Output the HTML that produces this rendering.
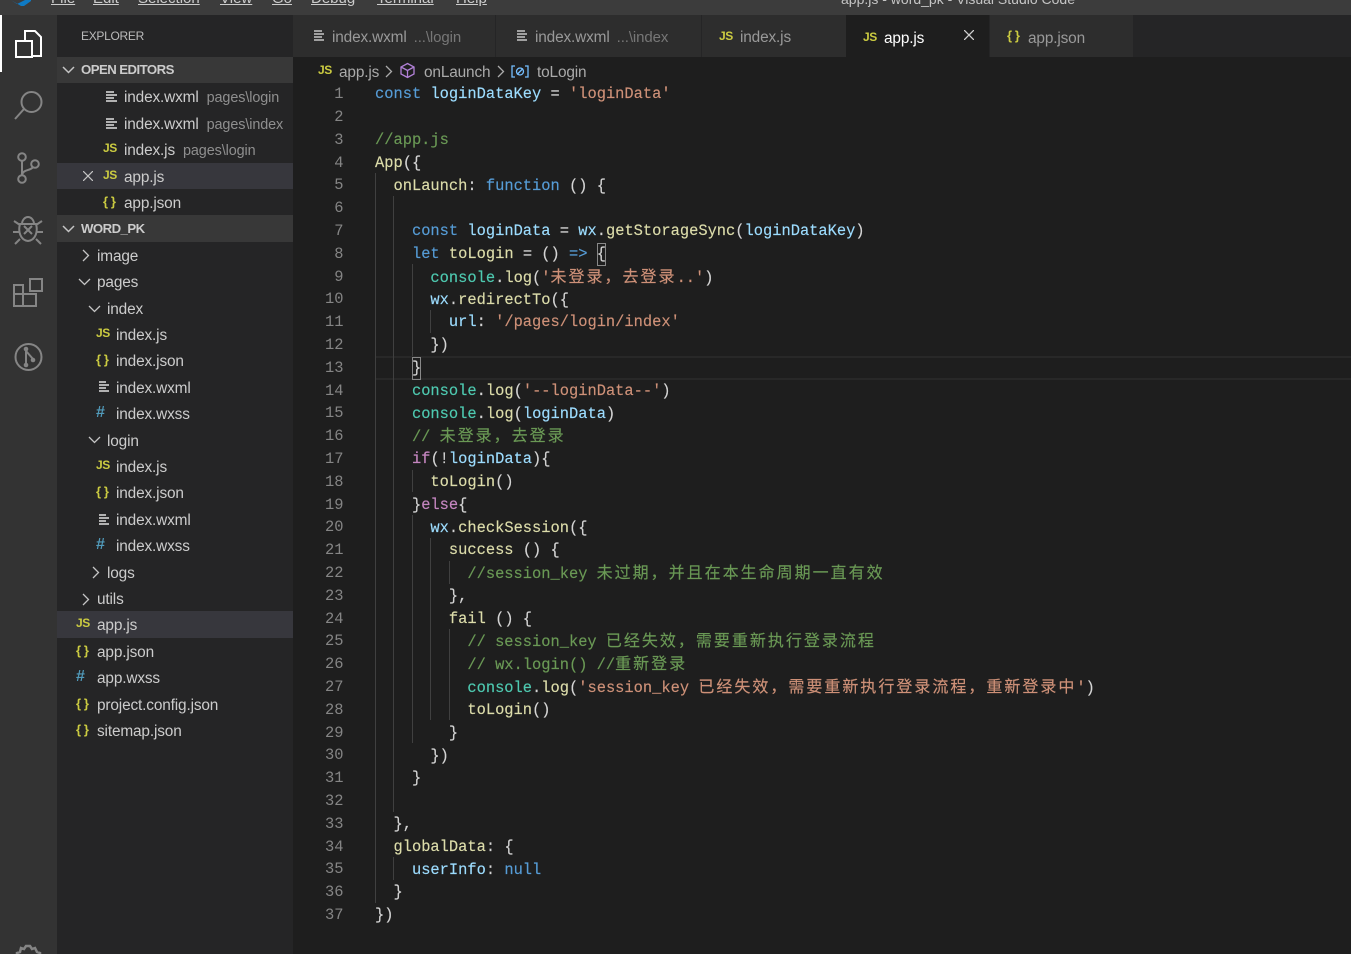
<!DOCTYPE html>
<html><head><meta charset="utf-8">
<style>
html,body{margin:0;padding:0;background:#1e1e1e;overflow:hidden}
#r{position:relative;width:1351px;height:954px;overflow:hidden;background:#1e1e1e;font-family:"Liberation Sans","Noto Sans CJK SC",sans-serif}
#r div,#r svg{position:absolute}
.m{top:-11px;font-size:15px;line-height:20px;color:#ccc;text-decoration:underline;white-space:nowrap}
.t{font-size:15.4px;line-height:20px;color:#ccc;white-space:nowrap;letter-spacing:-.15px;margin-top:.5px}
.t i{font-style:normal;font-size:14.4px;color:#8f8f8f;margin-left:8px;letter-spacing:-.1px}
.js{font-size:12px;font-weight:bold;color:#cbcb41;line-height:14px;letter-spacing:-.4px;margin-top:-1px}
.br{font-size:13px;font-weight:bold;color:#cbcb41;line-height:14px;white-space:nowrap;letter-spacing:-.4px}
.h{font-size:16px;font-weight:bold;color:#519aba;line-height:16px}
.sec{left:57px;width:236px;background:#383838}
.hd{font-size:13.2px;font-weight:bold;color:#ccc;line-height:16px;letter-spacing:-.55px;white-space:nowrap}
.tab{top:15px;height:42px;background:#2d2d2d}
.n{left:300px;width:43.5px;text-align:right;color:#858585;font:15.4px/22.8px "Liberation Mono",monospace;margin-top:1.3px}
.l{left:375px;font:15.4px/22.8px "Liberation Mono","Noto Sans CJK SC",monospace;color:#d4d4d4;white-space:pre;margin-top:1.4px;-webkit-text-stroke:.15px}
.l u{text-decoration:none;font-family:"Noto Sans CJK SC",sans-serif;font-size:16px;letter-spacing:2px}
.x{margin-top:-1px}.y{margin-top:0}
.k{color:#569cd6}.v{color:#9cdcfe}.s{color:#ce9178}.c{color:#6a9955}.f{color:#dcdcaa}.g{color:#4ec9b0}.p{color:#c586c0}
.ig{width:1px;background:#404040}
.ic{fill:none;stroke:#858585;stroke-width:2}
.ch{fill:none;stroke:#c5c5c5;stroke-width:1.3}
.wx{fill:none;stroke:#c5c5c5;stroke-width:1.7}
</style></head><body>
<div id="r">
<!-- title bar -->
<div style="left:0;top:0;width:1351px;height:15px;background:#3c3c3c"></div>
<svg style="left:8px;top:0" width="24" height="8"><path d="M3 0l6 4 8-4h6v1l-7 5-3 0z" fill="#0f7ac4"/></svg>
<div class="m" style="left:51px">File</div><div class="m" style="left:93px">Edit</div><div class="m" style="left:138px">Selection</div><div class="m" style="left:220px">View</div><div class="m" style="left:272px">Go</div><div class="m" style="left:311px">Debug</div><div class="m" style="left:377px">Terminal</div><div class="m" style="left:456px">Help</div>
<div class="m" style="left:841px;text-decoration:none;font-size:14px;color:#c4c4c4">app.js - word_pk - Visual Studio Code</div>
<!-- activity bar -->
<div style="left:0;top:15px;width:57px;height:939px;background:#333"></div>
<div style="left:0;top:15px;width:2px;height:57px;background:#fff"></div>
<svg style="left:0;top:15px" width="57" height="939">
<path d="M25 25v-9h10l6 6v19h-8" fill="none" stroke="#fff" stroke-width="2"/><path d="M16 26h16v16H16z" fill="none" stroke="#fff" stroke-width="2"/>
<circle class="ic" cx="31.5" cy="87" r="10"/><path class="ic" d="M24 94L15 104" stroke-width="2.2"/>
<circle class="ic" cx="22" cy="142" r="3.8"/><circle class="ic" cx="22" cy="164" r="3.8"/><circle class="ic" cx="35" cy="149" r="3.8"/><path class="ic" d="M22 146v14M22 160c1-6 9-4 11-8"/>
<path class="ic" d="M22 209c0-4 3-7 6-7s6 3 6 7M20 209h16c2 7 0 16-8 17-8-1-10-10-8-17zM14 206l6 4M42 206l-6 4M13 217h6M43 217h-6M15 229l5-5M41 229l-5-5M24 211l8 8M32 211l-8 8" stroke-width="1.8"/>
<path class="ic" d="M14 270h9v9h-9zM14 279h9v12h-9zM23 279h13v12H23zM30 264h12v12H30z" stroke-width="2"/>
<circle class="ic" cx="28.5" cy="342" r="13"/><path class="ic" d="M26 333v17M26 336l7 8"/><circle cx="26" cy="334" r="2.3" fill="#858585"/><circle cx="26" cy="350" r="2.3" fill="#858585"/><circle cx="33" cy="345" r="2.3" fill="#858585"/>
<path d="M17 941v-3l3-1 1-4 3 1 2-3h4l2 3 3-1 2 4 3 1v3" fill="none" stroke="#858585" stroke-width="2.5"/>
</svg>
<!-- sidebar -->
<div style="left:57px;top:15px;width:236px;height:939px;background:#252526"></div>
<div style="left:81px;top:28px;font-size:12px;line-height:16px;color:#bbb;letter-spacing:-.3px">EXPLORER</div>
<div class="sec" style="top:57px;height:26px"></div>
<div class="sec" style="top:215px;height:27px"></div>
<div style="left:57px;top:163px;width:236px;height:26px;background:#37373d"></div>
<div style="left:57px;top:611px;width:236px;height:27px;background:#37373d"></div>
<svg class="ch" style="left:62px;top:66px;stroke-width:1.5" width="13" height="8"><path d="M1 1l5.500 5.500L12 1"/></svg>
<div class="hd" style="left:81px;top:62px">OPEN EDITORS</div>
<svg class="ch" style="left:62px;top:225px;stroke-width:1.5" width="13" height="8"><path d="M1 1l5.500 5.500L12 1"/></svg>
<div class="hd" style="left:81px;top:221px">WORD_PK</div>

<svg class="wx" style="left:106px;top:91px" width="12" height="11"><path d="M0 1h8M0 4h11M0 7h8M0 10h11"/></svg>
<div class="t" style="left:124px;top:87px">index.wxml<i>pages\login</i></div>
<svg class="wx" style="left:106px;top:118px" width="12" height="11"><path d="M0 1h8M0 4h11M0 7h8M0 10h11"/></svg>
<div class="t" style="left:124px;top:114px">index.wxml<i>pages\index</i></div>
<div class="js" style="left:103px;top:142px">JS</div>
<div class="t" style="left:124px;top:140px">index.js<i>pages\login</i></div>
<svg style="left:83px;top:171px" width="10" height="10"><path d="M0 0l10 10M10 0L0 10" stroke="#c5c5c5" stroke-width="1.2"/></svg>
<div class="js" style="left:103px;top:169px">JS</div>
<div class="t" style="left:124px;top:167px">app.js</div>
<div class="br" style="left:103px;top:195px">{ }</div>
<div class="t" style="left:124px;top:193px">app.json</div>

<svg class="ch" style="left:82px;top:249px" width="8" height="13"><path d="M1 1l5.500 5.500L1 12"/></svg>
<div class="t" style="left:97px;top:246px">image</div>
<svg class="ch" style="left:78px;top:278px" width="13" height="8"><path d="M1 1l5.500 5.500L12 1"/></svg>
<div class="t" style="left:97px;top:272px">pages</div>
<svg class="ch" style="left:88px;top:305px" width="13" height="8"><path d="M1 1l5.500 5.500L12 1"/></svg>
<div class="t" style="left:107px;top:299px">index</div>
<div class="js" style="left:96px;top:327px">JS</div><div class="t" style="left:116px;top:325px">index.js</div>
<div class="br" style="left:96px;top:353px">{ }</div><div class="t" style="left:116px;top:351px">index.json</div>
<svg class="wx" style="left:99px;top:381px" width="11" height="11"><path d="M0 1h7M0 4h10M0 7h7M0 10h10"/></svg><div class="t" style="left:116px;top:378px">index.wxml</div>
<div class="h" style="left:96px;top:405px">#</div><div class="t" style="left:116px;top:404px">index.wxss</div>
<svg class="ch" style="left:88px;top:436px" width="13" height="8"><path d="M1 1l5.500 5.500L12 1"/></svg>
<div class="t" style="left:107px;top:431px">login</div>
<div class="js" style="left:96px;top:459px">JS</div><div class="t" style="left:116px;top:457px">index.js</div>
<div class="br" style="left:96px;top:485px">{ }</div><div class="t" style="left:116px;top:483px">index.json</div>
<svg class="wx" style="left:99px;top:514px" width="11" height="11"><path d="M0 1h7M0 4h10M0 7h7M0 10h10"/></svg><div class="t" style="left:116px;top:510px">index.wxml</div>
<div class="h" style="left:96px;top:537px">#</div><div class="t" style="left:116px;top:536px">index.wxss</div>
<svg class="ch" style="left:92px;top:566px" width="8" height="13"><path d="M1 1l5.500 5.500L1 12"/></svg>
<div class="t" style="left:107px;top:563px">logs</div>
<svg class="ch" style="left:82px;top:593px" width="8" height="13"><path d="M1 1l5.500 5.500L1 12"/></svg>
<div class="t" style="left:97px;top:589px">utils</div>
<div class="js" style="left:76px;top:617px">JS</div><div class="t" style="left:97px;top:615px">app.js</div>
<div class="br" style="left:76px;top:644px">{ }</div><div class="t" style="left:97px;top:642px">app.json</div>
<div class="h" style="left:76px;top:669px">#</div><div class="t" style="left:97px;top:668px">app.wxss</div>
<div class="br" style="left:76px;top:697px">{ }</div><div class="t" style="left:97px;top:695px">project.config.json</div>
<div class="br" style="left:76px;top:723px">{ }</div><div class="t" style="left:97px;top:721px">sitemap.json</div>

<!-- tabs -->
<div style="left:293px;top:15px;width:1058px;height:42px;background:#252526"></div>
<div class="tab" style="left:293px;width:202px"></div>
<div class="tab" style="left:496px;width:205px"></div>
<div class="tab" style="left:702px;width:144px"></div>
<div class="tab" style="left:846px;width:143px;background:#1e1e1e"></div>
<div class="tab" style="left:990px;width:143px"></div>
<svg class="wx" style="left:314px;top:30px;stroke:#b0b0b0" width="11" height="11"><path d="M0 1h8M0 4h10M0 7h8M0 10h10"/></svg>
<div class="t" style="left:332px;top:27px;color:#999">index.wxml<i style="color:#777;margin-left:7px;font-size:15px">...\login</i></div>
<svg class="wx" style="left:517px;top:30px;stroke:#b0b0b0" width="11" height="11"><path d="M0 1h8M0 4h10M0 7h8M0 10h10"/></svg>
<div class="t" style="left:535px;top:27px;color:#999">index.wxml<i style="color:#777;margin-left:7px;font-size:15px">...\index</i></div>
<div class="js" style="left:719px;top:30px">JS</div><div class="t" style="left:740px;top:27px;color:#999">index.js</div>
<div class="js" style="left:863px;top:31px">JS</div><div class="t" style="left:884px;top:28px;color:#fff">app.js</div>
<svg style="left:964px;top:30px" width="10" height="10"><path d="M0 0l10 10M10 0L0 10" stroke="#d0d0d0" stroke-width="1.3"/></svg>
<div class="br" style="left:1007px;top:29px">{ }</div><div class="t" style="left:1028px;top:28px;color:#999">app.json</div>

<!-- breadcrumbs -->
<div class="js" style="left:318px;top:64px">JS</div>
<div class="t" style="left:339px;top:62px;color:#aaa">app.js</div>
<svg class="ch" style="left:385px;top:65px;stroke:#aaa" width="8" height="13"><path d="M1 1l5.500 5.500L1 12"/></svg>
<svg style="left:399px;top:62px" width="17" height="17" fill="none" stroke="#b180d7" stroke-width="1.3"><path d="M8.500 1.500l6.500 3.500v7l-6.500 3.500L2 12V5zM2 5l6.500 3.500L15 5M8.500 8.500v7"/></svg>
<div class="t" style="left:424px;top:62px;color:#aaa">onLaunch</div>
<svg class="ch" style="left:497px;top:65px;stroke:#aaa" width="8" height="13"><path d="M1 1l5.500 5.500L1 12"/></svg>
<svg style="left:511px;top:65px" width="18" height="13" fill="none" stroke="#75beff" stroke-width="1.3"><path d="M4 1H1v11h3M14 1h3v11h-3"/><circle cx="9" cy="6.500" r="3.500"/><path d="M6 9.500l6-6"/></svg>
<div class="t" style="left:537px;top:62px;color:#aaa">toLogin</div>

<!-- current line + guides -->
<div style="left:375px;top:356px;width:976px;border-top:2px solid #282828;border-bottom:2px solid #282828;height:20px"></div>
<div class="ig" style="left:375px;top:173px;height:730px"></div>
<div class="ig" style="left:393px;top:196px;height:616px"></div>
<div class="ig" style="left:393px;top:857px;height:23px"></div>
<div class="ig" style="left:412px;top:264px;height:92px"></div>
<div class="ig" style="left:412px;top:470px;height:22px"></div>
<div class="ig" style="left:412px;top:515px;height:228px"></div>
<div class="ig" style="left:430px;top:310px;height:23px"></div>
<div class="ig" style="left:430px;top:538px;height:182px"></div>
<div class="ig" style="left:449px;top:561px;height:23px"></div>
<div class="ig" style="left:449px;top:629px;height:91px"></div>
<div style="left:597px;top:243px;width:7px;height:21px;border:1px solid #888"></div>
<div style="left:412px;top:357px;width:7px;height:21px;border:1px solid #888"></div>

<!-- line numbers -->
<div class="n" style="top:82px">1</div><div class="n" style="top:104.8px">2</div><div class="n" style="top:127.6px">3</div><div class="n" style="top:150.4px">4</div><div class="n" style="top:173.2px">5</div><div class="n" style="top:196px">6</div><div class="n" style="top:218.8px">7</div><div class="n" style="top:241.6px">8</div><div class="n" style="top:264.4px">9</div><div class="n" style="top:287.2px">10</div><div class="n" style="top:310px">11</div><div class="n" style="top:332.8px">12</div><div class="n" style="top:355.6px">13</div><div class="n" style="top:378.4px">14</div><div class="n" style="top:401.2px">15</div><div class="n" style="top:424px">16</div><div class="n" style="top:446.8px">17</div><div class="n" style="top:469.6px">18</div><div class="n" style="top:492.4px">19</div><div class="n" style="top:515.2px">20</div><div class="n" style="top:538px">21</div><div class="n" style="top:560.8px">22</div><div class="n" style="top:583.6px">23</div><div class="n" style="top:606.4px">24</div><div class="n" style="top:629.2px">25</div><div class="n" style="top:652px">26</div><div class="n" style="top:674.8px">27</div><div class="n" style="top:697.6px">28</div><div class="n" style="top:720.4px">29</div><div class="n" style="top:743.2px">30</div><div class="n" style="top:766px">31</div><div class="n" style="top:788.8px">32</div><div class="n" style="top:811.6px">33</div><div class="n" style="top:834.4px">34</div><div class="n" style="top:857.2px">35</div><div class="n" style="top:880px">36</div><div class="n" style="top:902.8px">37</div>

<!-- code -->
<div class="l" style="top:82px"><span class="k">const</span> <span class="v">loginDataKey</span> = <span class="s">'loginData'</span></div>
<div class="l c" style="top:127.6px">//app.js</div>
<div class="l" style="top:150.4px"><span class="f">App</span>({</div>
<div class="l" style="top:173.2px">  <span class="f">onLaunch</span>: <span class="k">function</span> () {</div>
<div class="l" style="top:218.8px">    <span class="k">const</span> <span class="v">loginData</span> = <span class="v">wx</span>.<span class="f">getStorageSync</span>(<span class="v">loginDataKey</span>)</div>
<div class="l" style="top:241.6px">    <span class="k">let</span> <span class="f">toLogin</span> = () <span class="k">=&gt;</span> {</div>
<div class="l y" style="top:264.4px">      <span class="g">console</span>.<span class="f">log</span>(<span class="s">'<u>未登录，去登录</u>..'</span>)</div>
<div class="l" style="top:287.2px">      <span class="v">wx</span>.<span class="f">redirectTo</span>({</div>
<div class="l" style="top:310px">        <span class="v">url</span>: <span class="s">'/pages/login/index'</span></div>
<div class="l" style="top:332.8px">      })</div>
<div class="l" style="top:355.6px">    }</div>
<div class="l" style="top:378.4px">    <span class="g">console</span>.<span class="f">log</span>(<span class="s">'--loginData--'</span>)</div>
<div class="l" style="top:401.2px">    <span class="g">console</span>.<span class="f">log</span>(<span class="v">loginData</span>)</div>
<div class="l c x" style="top:424px">    // <u>未登录，去登录</u></div>
<div class="l" style="top:446.8px">    <span class="p">if</span>(!<span class="v">loginData</span>){</div>
<div class="l" style="top:469.6px">      <span class="f">toLogin</span>()</div>
<div class="l" style="top:492.4px">    }<span class="p">else</span>{</div>
<div class="l" style="top:515.2px">      <span class="v">wx</span>.<span class="f">checkSession</span>({</div>
<div class="l" style="top:538px">        <span class="f">success</span> () {</div>
<div class="l c x" style="top:560.8px">          //session_key <u>未过期，并且在本生命周期一直有效</u></div>
<div class="l" style="top:583.6px">        },</div>
<div class="l" style="top:606.4px">        <span class="f">fail</span> () {</div>
<div class="l c x" style="top:629.2px">          // session_key <u>已经失效，需要重新执行登录流程</u></div>
<div class="l c x" style="top:652px">          // wx.login() //<u>重新登录</u></div>
<div class="l x" style="top:674.8px">          <span class="g">console</span>.<span class="f">log</span>(<span class="s">'session_key <u>已经失效，需要重新执行登录流程，重新登录中</u>'</span>)</div>
<div class="l" style="top:697.6px">          <span class="f">toLogin</span>()</div>
<div class="l" style="top:720.4px">        }</div>
<div class="l" style="top:743.2px">      })</div>
<div class="l" style="top:766px">    }</div>
<div class="l" style="top:811.6px">  },</div>
<div class="l" style="top:834.4px">  <span class="f">globalData</span>: {</div>
<div class="l" style="top:857.2px">    <span class="v">userInfo</span>: <span class="k">null</span></div>
<div class="l" style="top:880px">  }</div>
<div class="l" style="top:902.8px">})</div>
</div>
</body></html>
